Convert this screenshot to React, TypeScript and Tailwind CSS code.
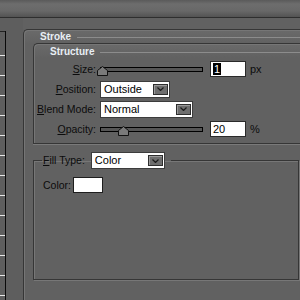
import React from 'react';

const Chevron = () => (
  <svg width="7" height="4" viewBox="0 0 7 4">
    <path d="M0.5 0.5 L3.5 3.5 L6.5 0.5" fill="none" stroke="#1a1a1a" strokeWidth="1.2" />
  </svg>
);

const Dropdown = ({ value, width }: { value: string; width: string }) => (
  <div className={`${width} h-[17px] bg-white border border-[#3c3c3c] flex items-center pl-[3px] pr-[1px]`}>
    <span className="flex-1 text-[11px] leading-none text-black">{value}</span>
    <div className="w-[15px] h-[11px] bg-[#6e6e6e] border border-[#2e2e2e] shadow-[inset_1px_1px_0_#9a9a9a] flex items-center justify-center">
      <Chevron />
    </div>
  </div>
);

const Slider = ({ thumb }: { thumb: string }) => (
  <div className="relative w-[103px] h-[5px] border border-black bg-[#565656]">
    <svg className={`absolute top-[-2px] ${thumb}`} width="11" height="10" viewBox="0 0 11 10">
      <path d="M5.5 0.5 L10.5 4.5 V9.5 H0.5 V4.5 Z" fill="#7a7a7a" stroke="#111" />
    </svg>
  </div>
);

const NumberBox = ({ children }: { children: React.ReactNode }) => (
  <div className="ml-[7px] w-[36px] h-[16px] bg-white border border-[#2a2a2a] flex items-center pl-[2px] text-[11px] leading-none text-black">
    {children}
  </div>
);

const Row = ({ label, children }: { label: React.ReactNode; children: React.ReactNode }) => (
  <div className="flex items-center h-[20px]">
    <div className="w-[62px] text-right text-[10.5px] leading-none text-[#0c0c0c]">{label}</div>
    <div className="ml-[4px] flex items-center">{children}</div>
  </div>
);

const Ruler = () => {
  const ticks = [];
  for (let y = 37; y < 290; y += 20) ticks.push(y);
  return (
    <svg width="23" height="282" viewBox="0 0 23 282">
      <line x1="0" y1="13.5" x2="6" y2="13.5" stroke="#222" />
      <line x1="5.5" y1="13" x2="5.5" y2="282" stroke="#0a0a0a" />
      {ticks.map((y) => (
        <line key={y} x1="0" y1={y + 0.5} x2="5" y2={y + 0.5} stroke="#e8e8e8" />
      ))}
    </svg>
  );
};

export default function App() {
  return (
    <div className="w-[300px] h-[300px] overflow-hidden bg-[#616161] flex flex-col font-['Liberation_Sans',Arial,sans-serif]">
      {/* top bar */}
      <div className="h-[18px] shrink-0 border-b border-[#2e2e2e] bg-[linear-gradient(to_bottom,#5a5a5a_0px,#6d6d6d_4px,#686868_11px,#535353_17px)]" />

      <div className="flex flex-1 min-h-0">
        <div className="w-[23px] shrink-0 bg-[#5e5e5e]">
          <Ruler />
        </div>

        {/* Stroke panel */}
        <div className="mt-[11px] flex-1 border-t border-l border-[#363636] rounded-tl-[5px] shadow-[inset_1px_1px_0_#767676] bg-[linear-gradient(to_bottom,#6a6a6a_0px,#616161_14px)]">
          <div className="h-[13px] flex items-center pl-[16px]">
            <span className="text-[10px] font-bold leading-none text-[#e8eef4]">Stroke</span>
            <div className="flex-1 h-px bg-[#8c8c8c] ml-[6px] mt-[1px]" />
          </div>

          {/* Structure box */}
          <div className="ml-[9px] border-t border-l border-b border-[#363636] rounded-tl-[5px] shadow-[inset_1px_1px_0_#767676,0_1px_0_#7a7a7a] bg-[linear-gradient(to_bottom,#6a6a6a_0px,#616161_14px)] pb-[4px]">
            <div className="h-[15px] flex items-center pl-[16px]">
              <span className="text-[10px] font-bold leading-none text-[#e8eef4]">Structure</span>
              <div className="flex-1 h-px bg-[#8c8c8c] ml-[6px] mt-[1px]" />
            </div>

            <Row label={<><u>S</u>ize:</>}>
              <Slider thumb="left-[-4px]" />
              <NumberBox>
                <span className="bg-black text-white px-[1px] h-[12px] flex items-center">1</span>
              </NumberBox>
              <span className="ml-[4px] text-[11px] text-[#0c0c0c]">px</span>
            </Row>
            <Row label={<><u>P</u>osition:</>}>
              <Dropdown value="Outside" width="w-[70px]" />
            </Row>
            <Row label={<><u>B</u>lend Mode:</>}>
              <Dropdown value="Normal" width="w-[93px]" />
            </Row>
            <Row label={<><u>O</u>pacity:</>}>
              <Slider thumb="left-[17px]" />
              <NumberBox>20</NumberBox>
              <span className="ml-[4px] text-[11px] text-[#0c0c0c]">%</span>
            </Row>
          </div>

          {/* Fill box */}
          <fieldset className="ml-[9px] mt-[8px] w-[266px] h-[128px] border border-[#363636] shadow-[inset_1px_1px_0_#777,1px_1px_0_#777] p-0 m-0">
            <legend className="ml-[8px] pl-[1px] pr-[6px]">
              <div className="flex items-center">
                <span className="text-[10.5px] leading-none text-[#0c0c0c]">
                  <u>F</u>ill Type:
                </span>
                <div className="ml-[6px]">
                  <Dropdown value="Color" width="w-[74px]" />
                </div>
              </div>
            </legend>
            <div className="flex items-center mt-[8px] pl-[9px]">
              <span className="text-[10.5px] leading-none text-[#0c0c0c]">Color:</span>
              <div className="ml-[2px] w-[30px] h-[16px] bg-white border border-[#1e1e1e]" />
            </div>
          </fieldset>
        </div>
      </div>
    </div>
  );
}
